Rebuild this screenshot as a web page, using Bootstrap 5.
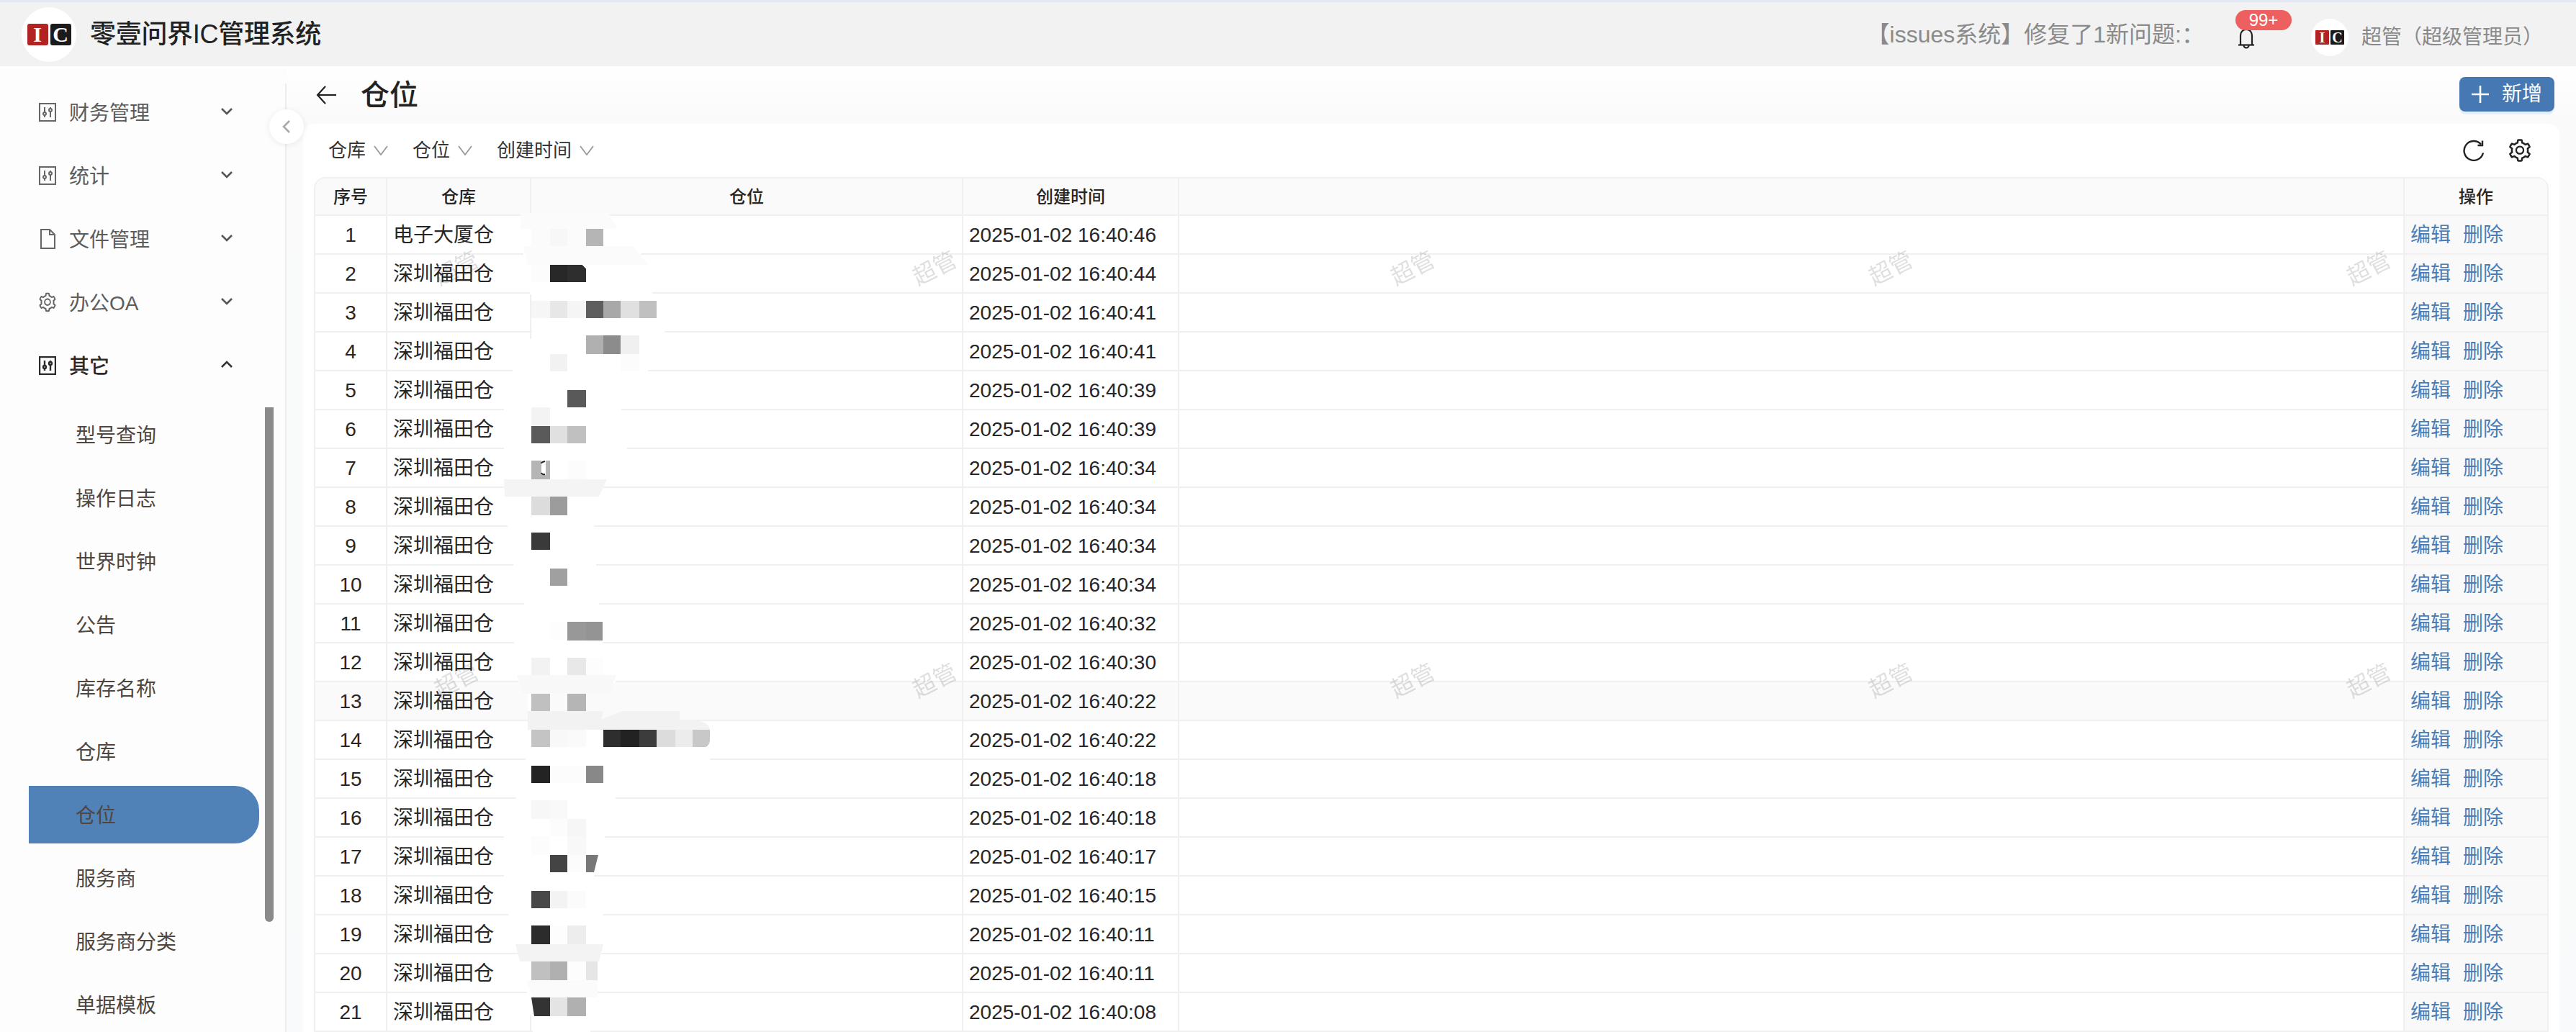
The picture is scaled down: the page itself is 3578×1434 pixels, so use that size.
<!DOCTYPE html>
<html lang="zh-CN">
<head>
<meta charset="utf-8">
<title>仓位</title>
<link href="https://cdn.jsdelivr.net/npm/bootstrap@5.3.0/dist/css/bootstrap.min.css" rel="stylesheet">
<style>
html,body{height:1434px;overflow:hidden;}
body{font-family:"Liberation Sans","Noto Sans CJK SC",sans-serif;background:#fff;color:#262626;position:relative;}
.top-strip{height:3px;background:#e3e8f3;}
.top-bar{height:89px;background:#f2f2f2;padding-left:30px;padding-right:46px;}
.logo-disc{background:#fff;border-radius:50%;gap:3px;flex:none;}
.logo-lg{width:76px;height:76px;}
.logo-sm{width:52px;height:52px;gap:2px;margin-top:8px;}
.logo-tile{color:#fff;font-family:"Liberation Serif",serif;font-weight:700;display:flex;align-items:center;justify-content:center;border-radius:3px;}
.logo-lg .logo-tile{width:29px;height:30px;font-size:30px;}
.logo-sm .logo-tile{width:19px;height:20px;font-size:20px;border-radius:1px;}
.tile-r{background:#b22424;}
.tile-k{background:#1b1b1b;}
.app-name{font-size:36px;font-weight:500;margin-left:19px;color:#222;line-height:1;letter-spacing:-.3px;}
.notice{font-size:32px;color:#8a8a8a;line-height:1;margin-right:46px;}
.bell-box{width:24px;height:28px;margin-top:13px;margin-right:78px;position:relative;display:block;}
.bell-count{position:absolute;left:-3px;top:-26px;width:78px;height:28px;border-radius:14px;background:#ee5f5f;color:#fff;font-size:24px;line-height:28px;text-align:center;}
.who{font-size:28px;color:#8a8a8a;margin-left:18px;margin-top:8px;line-height:1;}
.body-row{height:1342px;}
.side{width:398px;flex:none;background:#fdfdfd;position:relative;padding-top:24px;overflow:hidden;}
.side-rule{position:absolute;left:396px;top:24px;bottom:0;width:2px;background:#ececec;}
.side-item{height:80px;margin-bottom:8px;padding:3px 74px 0 54px;color:#5c5c5c;font-size:28px;}
.side-icon{flex:none;margin-top:-4px;}
.side-chev{flex:none;margin-top:-7px;}
.side-label{margin-left:18px;line-height:1;}
.side-open{color:#2a2a2a;font-weight:500;margin-bottom:16px;}
.side-sub{height:80px;margin-bottom:8px;margin-left:40px;width:320px;padding:3px 0 0 65px;color:#4f4640;font-size:28px;}
.side-active{background:#5182b7;border-radius:0 34px 34px 0;}
.side-bar{position:absolute;left:368px;top:474px;width:12px;height:715px;border-radius:0 0 6px 6px;background:#8a8a8a;}
.fold-btn{position:absolute;left:374px;top:152px;width:48px;height:48px;border-radius:50%;background:#fff;box-shadow:0 1px 8px rgba(0,0,0,.08);z-index:3;}
.main-area{background:linear-gradient(#fff,#fafafa 80px,#f9fafb);min-width:0;}
.head-row{height:80px;padding-left:41px;padding-right:30px;}
.page-name{font-size:40px;font-weight:500;margin-left:34px;margin-bottom:0;line-height:1;color:#222;}
.add-btn{width:132px;height:48px;background:#4679b3;border:0;border-radius:8px;box-shadow:0 4px 0 #e6eff7;color:#fff;font-size:28px;gap:18px;padding:0;margin-top:-2px;}
.sheet{margin-left:23px;margin-right:23px;background:#fff;border-radius:16px 16px 0 0;padding:0 15px;height:1262px;overflow:hidden;}
.filter-row{height:74px;padding-left:20px;padding-right:22px;}
.filter-item{font-size:26px;color:#333;gap:11px;margin-right:34px;line-height:1;}
.tool-gap{gap:31px;}
.grid-wrap{position:relative;border-top:2px solid #f0f0f0;border-left:2px solid #f0f0f0;border-radius:16px 16px 0 0;width:3104px;}
.grid-wrap .table{table-layout:fixed;width:3102px;border-collapse:separate;border-spacing:0;margin:0;--bs-table-bg:transparent;}
.grid-wrap th,.grid-wrap td{padding:2px 8px 0;vertical-align:middle;border:0;border-right:2px solid #f0f0f0;border-bottom:2px solid #f0f0f0;line-height:1;overflow:hidden;white-space:nowrap;color:#262626;}
.grid-wrap th{height:52px;background:#fafafa;font-size:24px;font-weight:500;text-align:center;}
.grid-wrap td{height:54px;font-size:28px;}
.grid-wrap th:first-child{border-top-left-radius:14px;}
.grid-wrap th:last-child{border-top-right-radius:14px;}
.grid-wrap td:first-child{text-align:center;}
.grid-wrap td:last-child{background:#f9f9f9;}
.grid-wrap tr.row-lit td{background:#fafafa;}
.act-link{color:#4a7db8;text-decoration:none;margin-right:17px;}
.w-a{width:100px;}.w-b{width:200px;}.w-c{width:600px;}.w-d{width:300px;}.w-e{width:1702px;}.w-f{width:200px;}
.mosaic{position:absolute;left:262px;top:48px;z-index:2;}
.wm-layer{position:absolute;left:302px;top:85.5px;display:grid;grid-template-columns:repeat(5,664px);grid-template-rows:repeat(2,573px);pointer-events:none;z-index:4;}
.wm-text{display:flex;align-items:center;justify-content:center;font-size:32px;color:rgba(0,0,0,.14);transform:rotate(-27deg);line-height:1;}
</style>
</head>
<body>
<div class="top-strip"></div>
<header class="top-bar d-flex align-items-center">
  <div class="logo-disc logo-lg d-flex align-items-center justify-content-center"><span class="logo-tile tile-r">I</span><span class="logo-tile tile-k">C</span></div>
  <div class="app-name">零壹问界IC管理系统</div>
  <div class="ms-auto notice">【issues系统】修复了1新问题:：</div>
  <div class="bell-box">
    <svg width="24" height="28" viewBox="0 0 24 28" fill="none" stroke="#222" stroke-width="2.2"><path d="M4 22V9a8 8 0 0 1 16 0v13"/><path d="M1 22.5h22"/><path d="M8.5 23a3.5 3.5 0 0 0 7 0"/></svg>
    <span class="bell-count">99+</span>
  </div>
  <div class="logo-disc logo-sm d-flex align-items-center justify-content-center"><span class="logo-tile tile-r">I</span><span class="logo-tile tile-k">C</span></div>
  <div class="who">超管（超级管理员）</div>
</header>
<div class="body-row d-flex">
  <aside class="side">
    <div class="side-rule"></div>
    <div class="side-item d-flex align-items-center">
      <svg class="side-icon" width="24" height="26" viewBox="0 0 24 26" fill="none" stroke="#666" stroke-width="2"><rect x="1" y="1" width="22" height="24"/><path d="M8 6v14M16 6v14"/><circle cx="8" cy="15" r="2" fill="#fff"/><circle cx="16" cy="10" r="2" fill="#fff"/></svg>
      <span class="side-label">财务管理</span>
      <svg class="side-chev ms-auto" width="18" height="11" viewBox="0 0 18 11" fill="none" stroke="#555" stroke-width="2.6"><path d="M2 2l7 7 7-7"/></svg>
    </div>
    <div class="side-item d-flex align-items-center">
      <svg class="side-icon" width="24" height="26" viewBox="0 0 24 26" fill="none" stroke="#666" stroke-width="2"><rect x="1" y="1" width="22" height="24"/><path d="M8 6v14M16 6v14"/><circle cx="8" cy="15" r="2" fill="#fff"/><circle cx="16" cy="10" r="2" fill="#fff"/></svg>
      <span class="side-label">统计</span>
      <svg class="side-chev ms-auto" width="18" height="11" viewBox="0 0 18 11" fill="none" stroke="#555" stroke-width="2.6"><path d="M2 2l7 7 7-7"/></svg>
    </div>
    <div class="side-item d-flex align-items-center">
      <svg class="side-icon" width="24" height="28" viewBox="0 0 24 28" fill="none" stroke="#666" stroke-width="2"><path d="M3 1h12l7 7v19H3z"/><path d="M15 1v7h7"/></svg>
      <span class="side-label">文件管理</span>
      <svg class="side-chev ms-auto" width="18" height="11" viewBox="0 0 18 11" fill="none" stroke="#555" stroke-width="2.6"><path d="M2 2l7 7 7-7"/></svg>
    </div>
    <div class="side-item d-flex align-items-center">
      <svg class="side-icon" width="24" height="28" viewBox="70 40 884 944" preserveAspectRatio="none" fill="#666"><path d="M924.8 625.7l-65.5-56c3.1-19 4.7-38.4 4.7-57.8s-1.6-38.8-4.7-57.8l65.5-56a32.03 32.03 0 0 0 9.3-35.2l-.9-2.6a443.74 443.74 0 0 0-79.7-137.9l-1.8-2.1a32.12 32.12 0 0 0-35.1-9.5l-81.3 28.9c-30-24.6-63.5-44-99.7-57.6l-15.7-85a32.05 32.05 0 0 0-25.8-25.7l-2.7-.5c-52.1-9.4-106.9-9.4-159 0l-2.7.5a32.05 32.05 0 0 0-25.8 25.7l-15.8 85.4a351.86 351.86 0 0 0-99 57.4l-81.9-29.1a32 32 0 0 0-35.1 9.5l-1.8 2.1a446.02 446.02 0 0 0-79.7 137.9l-.9 2.6c-4.5 12.5-.8 26.5 9.3 35.2l66.3 56.6c-3.1 18.8-4.6 38-4.6 57.1 0 19.2 1.5 38.4 4.6 57.1L99 625.5a32.03 32.03 0 0 0-9.3 35.2l.9 2.6c18.1 50.4 44.9 96.9 79.7 137.9l1.8 2.1a32.12 32.12 0 0 0 35.1 9.5l81.9-29.1c29.8 24.5 63.1 43.9 99 57.4l15.8 85.4a32.05 32.05 0 0 0 25.8 25.7l2.7.5a449.4 449.4 0 0 0 159 0l2.7-.5a32.05 32.05 0 0 0 25.8-25.7l15.7-85a350 350 0 0 0 99.7-57.6l81.3 28.9a32 32 0 0 0 35.1-9.5l1.8-2.1c34.8-41.1 61.6-87.5 79.7-137.9l.9-2.6c4.5-12.3.8-26.3-9.3-35zM788.3 465.9c2.5 15.1 3.8 30.6 3.8 46.1s-1.3 31-3.8 46.1l-6.6 40.1 74.7 63.9a370.03 370.03 0 0 1-42.6 73.6L721 702.8l-31.4 25.8c-23.9 19.6-50.5 35-79.3 45.8l-38.1 14.3-17.9 97a377.5 377.5 0 0 1-85 0l-17.9-97.2-37.8-14.5c-28.5-10.8-55-26.2-78.7-45.7l-31.4-25.9-93.4 33.2c-17-22.9-31.2-47.6-42.6-73.6l75.5-64.5-6.5-40c-2.4-14.9-3.7-30.3-3.7-45.5 0-15.3 1.2-30.6 3.7-45.5l6.5-40-75.5-64.5c11.3-26.1 25.6-50.7 42.6-73.6l93.4 33.2 31.4-25.9c23.7-19.5 50.2-34.9 78.7-45.7l37.9-14.3 17.9-97.2c28.1-3.2 56.8-3.2 85 0l17.9 97 38.1 14.3c28.7 10.8 55.4 26.2 79.3 45.8l31.4 25.8 92.8-32.9c17 22.9 31.2 47.6 42.6 73.6L781.8 426l6.5 39.9zM512 326c-97.2 0-176 78.8-176 176s78.8 176 176 176 176-78.8 176-176-78.8-176-176-176zm79.2 255.2A111.6 111.6 0 0 1 512 614c-29.9 0-58-11.7-79.2-32.8A111.6 111.6 0 0 1 400 502c0-29.9 11.7-58 32.8-79.2C454 401.6 482.1 390 512 390c29.9 0 58 11.6 79.2 32.8A111.6 111.6 0 0 1 624 502c0 29.9-11.7 58-32.8 79.2z"/></svg>
      <span class="side-label">办公OA</span>
      <svg class="side-chev ms-auto" width="18" height="11" viewBox="0 0 18 11" fill="none" stroke="#555" stroke-width="2.6"><path d="M2 2l7 7 7-7"/></svg>
    </div>
    <div class="side-item side-open d-flex align-items-center">
      <svg class="side-icon" width="24" height="26" viewBox="0 0 24 26" fill="none" stroke="#2a2a2a" stroke-width="2.4"><rect x="1" y="1" width="22" height="24"/><path d="M8 6v14M16 6v14"/><circle cx="8" cy="15" r="2" fill="#fff"/><circle cx="16" cy="10" r="2" fill="#fff"/></svg>
      <span class="side-label">其它</span>
      <svg class="side-chev ms-auto" width="18" height="11" viewBox="0 0 18 11" fill="none" stroke="#333" stroke-width="2.6"><path d="M2 9l7-7 7 7"/></svg>
    </div>
    <div class="side-sub d-flex align-items-center">型号查询</div>
    <div class="side-sub d-flex align-items-center">操作日志</div>
    <div class="side-sub d-flex align-items-center">世界时钟</div>
    <div class="side-sub d-flex align-items-center">公告</div>
    <div class="side-sub d-flex align-items-center">库存名称</div>
    <div class="side-sub d-flex align-items-center">仓库</div>
    <div class="side-sub side-active d-flex align-items-center">仓位</div>
    <div class="side-sub d-flex align-items-center">服务商</div>
    <div class="side-sub d-flex align-items-center">服务商分类</div>
    <div class="side-sub d-flex align-items-center">单据模板</div>
    <div class="side-bar"></div>
  </aside>
  <div class="fold-btn d-flex align-items-center justify-content-center">
    <svg width="12" height="20" viewBox="0 0 12 20" fill="none" stroke="#aaa" stroke-width="2.6"><path d="M10 2l-8 8 8 8"/></svg>
  </div>
  <main class="main-area flex-grow-1">
    <div class="head-row d-flex align-items-center">
      <svg width="28" height="26" viewBox="0 0 28 26" fill="none" stroke="#222" stroke-width="2.2"><path d="M13 1L2 13l11 12"/><path d="M2 13h26"/></svg>
      <h1 class="page-name">仓位</h1>
      <button class="add-btn btn ms-auto d-flex align-items-center justify-content-center" type="button">
        <svg width="24" height="24" viewBox="0 0 24 24" fill="none" stroke="#fff" stroke-width="2.6"><path d="M12 0v24M0 12h24"/></svg>
        <span>新增</span>
      </button>
    </div>
    <section class="sheet">
      <div class="filter-row d-flex align-items-center">
        <div class="filter-item d-flex align-items-center">仓库<svg width="20" height="14" viewBox="0 0 20 14" fill="none" stroke="#999" stroke-width="1.8"><path d="M1 1l9 12 9-12"/></svg></div>
        <div class="filter-item d-flex align-items-center">仓位<svg width="20" height="14" viewBox="0 0 20 14" fill="none" stroke="#999" stroke-width="1.8"><path d="M1 1l9 12 9-12"/></svg></div>
        <div class="filter-item d-flex align-items-center">创建时间<svg width="20" height="14" viewBox="0 0 20 14" fill="none" stroke="#999" stroke-width="1.8"><path d="M1 1l9 12 9-12"/></svg></div>
        <div class="ms-auto d-flex align-items-center tool-gap">
          <svg width="30" height="30" viewBox="0 0 30 30" fill="none" stroke="#222" stroke-width="2.4"><path d="M28 18.5A13.4 13.4 0 1 1 25 6.5"/><path d="M27 1.5V8h-6.5"/></svg>
          <svg width="36" height="36" viewBox="0 0 1024 1024" fill="#222"><path d="M924.8 625.7l-65.5-56c3.1-19 4.7-38.4 4.7-57.8s-1.6-38.8-4.7-57.8l65.5-56a32.03 32.03 0 0 0 9.3-35.2l-.9-2.6a443.74 443.74 0 0 0-79.7-137.9l-1.8-2.1a32.12 32.12 0 0 0-35.1-9.5l-81.3 28.9c-30-24.6-63.5-44-99.7-57.6l-15.7-85a32.05 32.05 0 0 0-25.8-25.7l-2.7-.5c-52.1-9.4-106.9-9.4-159 0l-2.7.5a32.05 32.05 0 0 0-25.8 25.7l-15.8 85.4a351.86 351.86 0 0 0-99 57.4l-81.9-29.1a32 32 0 0 0-35.1 9.5l-1.8 2.1a446.02 446.02 0 0 0-79.7 137.9l-.9 2.6c-4.5 12.5-.8 26.5 9.3 35.2l66.3 56.6c-3.1 18.8-4.6 38-4.6 57.1 0 19.2 1.5 38.4 4.6 57.1L99 625.5a32.03 32.03 0 0 0-9.3 35.2l.9 2.6c18.1 50.4 44.9 96.9 79.7 137.9l1.8 2.1a32.12 32.12 0 0 0 35.1 9.5l81.9-29.1c29.8 24.5 63.1 43.9 99 57.4l15.8 85.4a32.05 32.05 0 0 0 25.8 25.7l2.7.5a449.4 449.4 0 0 0 159 0l2.7-.5a32.05 32.05 0 0 0 25.8-25.7l15.7-85a350 350 0 0 0 99.7-57.6l81.3 28.9a32 32 0 0 0 35.1-9.5l1.8-2.1c34.8-41.1 61.6-87.5 79.7-137.9l.9-2.6c4.5-12.3.8-26.3-9.3-35zM788.3 465.9c2.5 15.1 3.8 30.6 3.8 46.1s-1.3 31-3.8 46.1l-6.6 40.1 74.7 63.9a370.03 370.03 0 0 1-42.6 73.6L721 702.8l-31.4 25.8c-23.9 19.6-50.5 35-79.3 45.8l-38.1 14.3-17.9 97a377.5 377.5 0 0 1-85 0l-17.9-97.2-37.8-14.5c-28.5-10.8-55-26.2-78.7-45.7l-31.4-25.9-93.4 33.2c-17-22.9-31.2-47.6-42.6-73.6l75.5-64.5-6.5-40c-2.4-14.9-3.7-30.3-3.7-45.5 0-15.3 1.2-30.6 3.7-45.5l6.5-40-75.5-64.5c11.3-26.1 25.6-50.7 42.6-73.6l93.4 33.2 31.4-25.9c23.7-19.5 50.2-34.9 78.7-45.7l37.9-14.3 17.9-97.2c28.1-3.2 56.8-3.2 85 0l17.9 97 38.1 14.3c28.7 10.8 55.4 26.2 79.3 45.8l31.4 25.8 92.8-32.9c17 22.9 31.2 47.6 42.6 73.6L781.8 426l6.5 39.9zM512 326c-97.2 0-176 78.8-176 176s78.8 176 176 176 176-78.8 176-176-78.8-176-176-176zm79.2 255.2A111.6 111.6 0 0 1 512 614c-29.9 0-58-11.7-79.2-32.8A111.6 111.6 0 0 1 400 502c0-29.9 11.7-58 32.8-79.2C454 401.6 482.1 390 512 390c29.9 0 58 11.6 79.2 32.8A111.6 111.6 0 0 1 624 502c0 29.9-11.7 58-32.8 79.2z"/></svg>
        </div>
      </div>
      <div class="grid-wrap">
        <table class="table">
          <colgroup><col class="w-a"><col class="w-b"><col class="w-c"><col class="w-d"><col class="w-e"><col class="w-f"></colgroup>
          <thead><tr><th>序号</th><th>仓库</th><th>仓位</th><th>创建时间</th><th></th><th>操作</th></tr></thead>
          <tbody>
            <tr><td>1</td><td>电子大厦仓</td><td></td><td>2025-01-02 16:40:46</td><td></td><td><a class="act-link" href="#">编辑</a><a class="act-link" href="#">删除</a></td></tr>
            <tr><td>2</td><td>深圳福田仓</td><td></td><td>2025-01-02 16:40:44</td><td></td><td><a class="act-link" href="#">编辑</a><a class="act-link" href="#">删除</a></td></tr>
            <tr><td>3</td><td>深圳福田仓</td><td></td><td>2025-01-02 16:40:41</td><td></td><td><a class="act-link" href="#">编辑</a><a class="act-link" href="#">删除</a></td></tr>
            <tr><td>4</td><td>深圳福田仓</td><td></td><td>2025-01-02 16:40:41</td><td></td><td><a class="act-link" href="#">编辑</a><a class="act-link" href="#">删除</a></td></tr>
            <tr><td>5</td><td>深圳福田仓</td><td></td><td>2025-01-02 16:40:39</td><td></td><td><a class="act-link" href="#">编辑</a><a class="act-link" href="#">删除</a></td></tr>
            <tr><td>6</td><td>深圳福田仓</td><td></td><td>2025-01-02 16:40:39</td><td></td><td><a class="act-link" href="#">编辑</a><a class="act-link" href="#">删除</a></td></tr>
            <tr><td>7</td><td>深圳福田仓</td><td></td><td>2025-01-02 16:40:34</td><td></td><td><a class="act-link" href="#">编辑</a><a class="act-link" href="#">删除</a></td></tr>
            <tr><td>8</td><td>深圳福田仓</td><td></td><td>2025-01-02 16:40:34</td><td></td><td><a class="act-link" href="#">编辑</a><a class="act-link" href="#">删除</a></td></tr>
            <tr><td>9</td><td>深圳福田仓</td><td></td><td>2025-01-02 16:40:34</td><td></td><td><a class="act-link" href="#">编辑</a><a class="act-link" href="#">删除</a></td></tr>
            <tr><td>10</td><td>深圳福田仓</td><td></td><td>2025-01-02 16:40:34</td><td></td><td><a class="act-link" href="#">编辑</a><a class="act-link" href="#">删除</a></td></tr>
            <tr><td>11</td><td>深圳福田仓</td><td></td><td>2025-01-02 16:40:32</td><td></td><td><a class="act-link" href="#">编辑</a><a class="act-link" href="#">删除</a></td></tr>
            <tr><td>12</td><td>深圳福田仓</td><td></td><td>2025-01-02 16:40:30</td><td></td><td><a class="act-link" href="#">编辑</a><a class="act-link" href="#">删除</a></td></tr>
            <tr class="row-lit"><td>13</td><td>深圳福田仓</td><td></td><td>2025-01-02 16:40:22</td><td></td><td><a class="act-link" href="#">编辑</a><a class="act-link" href="#">删除</a></td></tr>
            <tr><td>14</td><td>深圳福田仓</td><td></td><td>2025-01-02 16:40:22</td><td></td><td><a class="act-link" href="#">编辑</a><a class="act-link" href="#">删除</a></td></tr>
            <tr><td>15</td><td>深圳福田仓</td><td></td><td>2025-01-02 16:40:18</td><td></td><td><a class="act-link" href="#">编辑</a><a class="act-link" href="#">删除</a></td></tr>
            <tr><td>16</td><td>深圳福田仓</td><td></td><td>2025-01-02 16:40:18</td><td></td><td><a class="act-link" href="#">编辑</a><a class="act-link" href="#">删除</a></td></tr>
            <tr><td>17</td><td>深圳福田仓</td><td></td><td>2025-01-02 16:40:17</td><td></td><td><a class="act-link" href="#">编辑</a><a class="act-link" href="#">删除</a></td></tr>
            <tr><td>18</td><td>深圳福田仓</td><td></td><td>2025-01-02 16:40:15</td><td></td><td><a class="act-link" href="#">编辑</a><a class="act-link" href="#">删除</a></td></tr>
            <tr><td>19</td><td>深圳福田仓</td><td></td><td>2025-01-02 16:40:11</td><td></td><td><a class="act-link" href="#">编辑</a><a class="act-link" href="#">删除</a></td></tr>
            <tr><td>20</td><td>深圳福田仓</td><td></td><td>2025-01-02 16:40:11</td><td></td><td><a class="act-link" href="#">编辑</a><a class="act-link" href="#">删除</a></td></tr>
            <tr><td>21</td><td>深圳福田仓</td><td></td><td>2025-01-02 16:40:08</td><td></td><td><a class="act-link" href="#">编辑</a><a class="act-link" href="#">删除</a></td></tr>
          </tbody>
        </table>
        <svg class="mosaic" width="320" height="1140" viewBox="700 296 320 1140" shape-rendering="crispEdges">
          <g fill="#fff">
            <rect x="727" y="350" width="163" height="5"/><rect x="736" y="404" width="170" height="5"/><rect x="739" y="458" width="184" height="5"/>
            <rect x="712" y="512" width="188" height="5"/><rect x="700" y="566" width="163" height="5"/><rect x="700" y="620" width="171" height="5"/>
            <rect x="700" y="674" width="138" height="5"/><rect x="705" y="728" width="120" height="5"/><rect x="713" y="782" width="115" height="5"/>
            <rect x="728" y="836" width="104" height="5"/><rect x="714" y="890" width="123" height="5"/><rect x="720" y="944" width="135" height="5"/>
            <rect x="730" y="1052" width="256" height="5"/><rect x="717" y="1106" width="138" height="5"/><rect x="700" y="1160" width="140" height="5"/>
            <rect x="700" y="1214" width="125" height="5"/><rect x="707" y="1268" width="130" height="5"/><rect x="720" y="1322" width="115" height="5"/>
            <rect x="732" y="1376" width="98" height="5"/><rect x="740" y="1430" width="80" height="5"/>
            <rect x="733" y="300" width="10" height="106"/><rect x="733" y="471" width="10" height="940"/>
          </g>
          <g shape-rendering="auto">
            <path fill="#fbfbfb" d="M723 296H845L858 318H723Z"/>
            <path fill="#fbfbfb" d="M727 342H880L900 368H733Z"/>
            <path fill="#f4f4f4" d="M700 666H843L832 690H701Z"/>
            <path fill="#f8f8f8" d="M718 938H856L846 964H726Z"/>
            <path fill="#f2f2f2" d="M733 988H838L835 1000L865 988H944V1000H960Q985 1002 986 1014H733Z"/>
            <path fill="#f3f3f3" d="M716 1312H838L832 1336H722Z"/>
            <path fill="#fbfbfb" d="M731 1362H830V1386H739Z"/>
            <path fill="#333" d="M738 1386H764V1412H742Z"/>
            <path fill="#777" d="M814 1188H831L825 1212H814Z"/>
          </g>
          <rect x="738" y="318" width="26" height="24" fill="#fbfbfb"/><rect x="764" y="318" width="24" height="24" fill="#f7f7f7"/><rect x="788" y="318" width="26" height="24" fill="#fbfbfb"/><rect x="814" y="318" width="24" height="24" fill="#b5b5b5"/>
          <rect x="738" y="368" width="26" height="24" fill="#fcfcfc"/><rect x="764" y="368" width="24" height="24" fill="#282828"/><path d="M788 368H808L814 374V392H788Z" fill="#2e2e2e"/>
          <rect x="738" y="418" width="26" height="24" fill="#f6f6f6"/><rect x="764" y="418" width="24" height="24" fill="#e7e7e7"/><rect x="788" y="418" width="26" height="24" fill="#f5f5f5"/><rect x="814" y="418" width="24" height="24" fill="#5e5e5e"/><rect x="838" y="418" width="24" height="24" fill="#a8a8a8"/><rect x="862" y="418" width="26" height="24" fill="#e0e0e0"/><rect x="888" y="418" width="24" height="24" fill="#c0c0c0"/>
          <rect x="814" y="466" width="24" height="26" fill="#b0b0b0"/><rect x="838" y="466" width="24" height="26" fill="#8c8c8c"/><rect x="862" y="466" width="26" height="26" fill="#f0f0f0"/>
          <rect x="764" y="492" width="24" height="24" fill="#f2f2f2"/><rect x="862" y="492" width="26" height="24" fill="#fcfcfc"/>
          <rect x="788" y="542" width="26" height="24" fill="#595959"/>
          <rect x="738" y="566" width="26" height="26" fill="#f3f3f3"/>
          <rect x="738" y="592" width="26" height="24" fill="#5a5a5a"/><rect x="764" y="592" width="24" height="24" fill="#e0e0e0"/><rect x="788" y="592" width="26" height="24" fill="#c0c0c0"/>
          <rect x="738" y="640" width="26" height="26" fill="#b5b5b5"/><rect x="788" y="640" width="26" height="26" fill="#fcfcfc"/>
          <rect x="738" y="690" width="26" height="26" fill="#dcdcdc"/><rect x="764" y="690" width="24" height="26" fill="#9c9c9c"/>
          <path d="M752 640h6v20h-6z" fill="#fff"/><path d="M757 641q-5 1-5 3M752 657q1 3 5 2" fill="none" stroke="#222" stroke-width="2" shape-rendering="auto"/>
          <rect x="738" y="740" width="26" height="24" fill="#3a3a3a"/>
          <rect x="764" y="790" width="24" height="24" fill="#a0a0a0"/>
          <rect x="764" y="864" width="24" height="26" fill="#fdfdfd"/><rect x="788" y="864" width="26" height="26" fill="#989898"/><rect x="814" y="864" width="23" height="26" fill="#949494"/>
          <rect x="738" y="914" width="26" height="24" fill="#f2f2f2"/><rect x="788" y="914" width="26" height="24" fill="#e8e8e8"/><rect x="814" y="914" width="24" height="24" fill="#fdfdfd"/>
          <rect x="738" y="964" width="26" height="24" fill="#c0c0c0"/><rect x="788" y="964" width="26" height="24" fill="#b5b5b5"/>
          <rect x="738" y="1014" width="26" height="24" fill="#c4c4c4"/><rect x="764" y="1014" width="24" height="24" fill="#f8f8f8"/><rect x="788" y="1014" width="26" height="24" fill="#fafafa"/><rect x="838" y="1014" width="24" height="24" fill="#2e2e2e"/><rect x="862" y="1014" width="26" height="24" fill="#222"/><rect x="888" y="1014" width="24" height="24" fill="#3c3c3c"/><rect x="912" y="1014" width="26" height="24" fill="#dcdcdc"/><rect x="938" y="1014" width="24" height="24" fill="#ececec"/><path d="M962 1014H986V1026Q986 1036 980 1038H962Z" fill="#c8c8c8"/>
          <rect x="738" y="1064" width="26" height="24" fill="#232323"/><rect x="764" y="1064" width="50" height="24" fill="#fcfcfc"/><rect x="814" y="1064" width="24" height="24" fill="#888"/>
          <rect x="738" y="1112" width="26" height="26" fill="#f7f7f7"/><rect x="764" y="1112" width="24" height="26" fill="#f9f9f9"/>
          <rect x="764" y="1138" width="24" height="24" fill="#fcfcfc"/><rect x="788" y="1138" width="26" height="24" fill="#f6f6f6"/>
          <rect x="738" y="1162" width="26" height="26" fill="#fcfcfc"/><rect x="788" y="1162" width="26" height="26" fill="#f8f8f8"/>
          <rect x="764" y="1188" width="24" height="24" fill="#444"/><rect x="788" y="1188" width="26" height="24" fill="#fcfcfc"/>
          <rect x="738" y="1238" width="26" height="24" fill="#484848"/><rect x="764" y="1238" width="24" height="24" fill="#f3f3f3"/><rect x="788" y="1238" width="26" height="24" fill="#fbfbfb"/>
          <rect x="738" y="1286" width="26" height="26" fill="#2c2c2c"/><rect x="764" y="1286" width="24" height="26" fill="#fdfdfd"/><rect x="788" y="1286" width="26" height="26" fill="#ededed"/>
          <rect x="738" y="1336" width="26" height="26" fill="#c0c0c0"/><rect x="764" y="1336" width="24" height="26" fill="#b0b0b0"/><rect x="788" y="1336" width="26" height="26" fill="#fdfdfd"/><rect x="814" y="1336" width="16" height="26" fill="#e6e6e6"/>
          <rect x="764" y="1386" width="24" height="26" fill="#e4e4e4"/><rect x="788" y="1386" width="26" height="26" fill="#b0b0b0"/>
        </svg>
      </div>
    </section>
  </main>
</div>
<div class="wm-layer">
  <span class="wm-text">超管</span><span class="wm-text">超管</span><span class="wm-text">超管</span><span class="wm-text">超管</span><span class="wm-text">超管</span>
  <span class="wm-text">超管</span><span class="wm-text">超管</span><span class="wm-text">超管</span><span class="wm-text">超管</span><span class="wm-text">超管</span>
</div>
</body>
</html>
